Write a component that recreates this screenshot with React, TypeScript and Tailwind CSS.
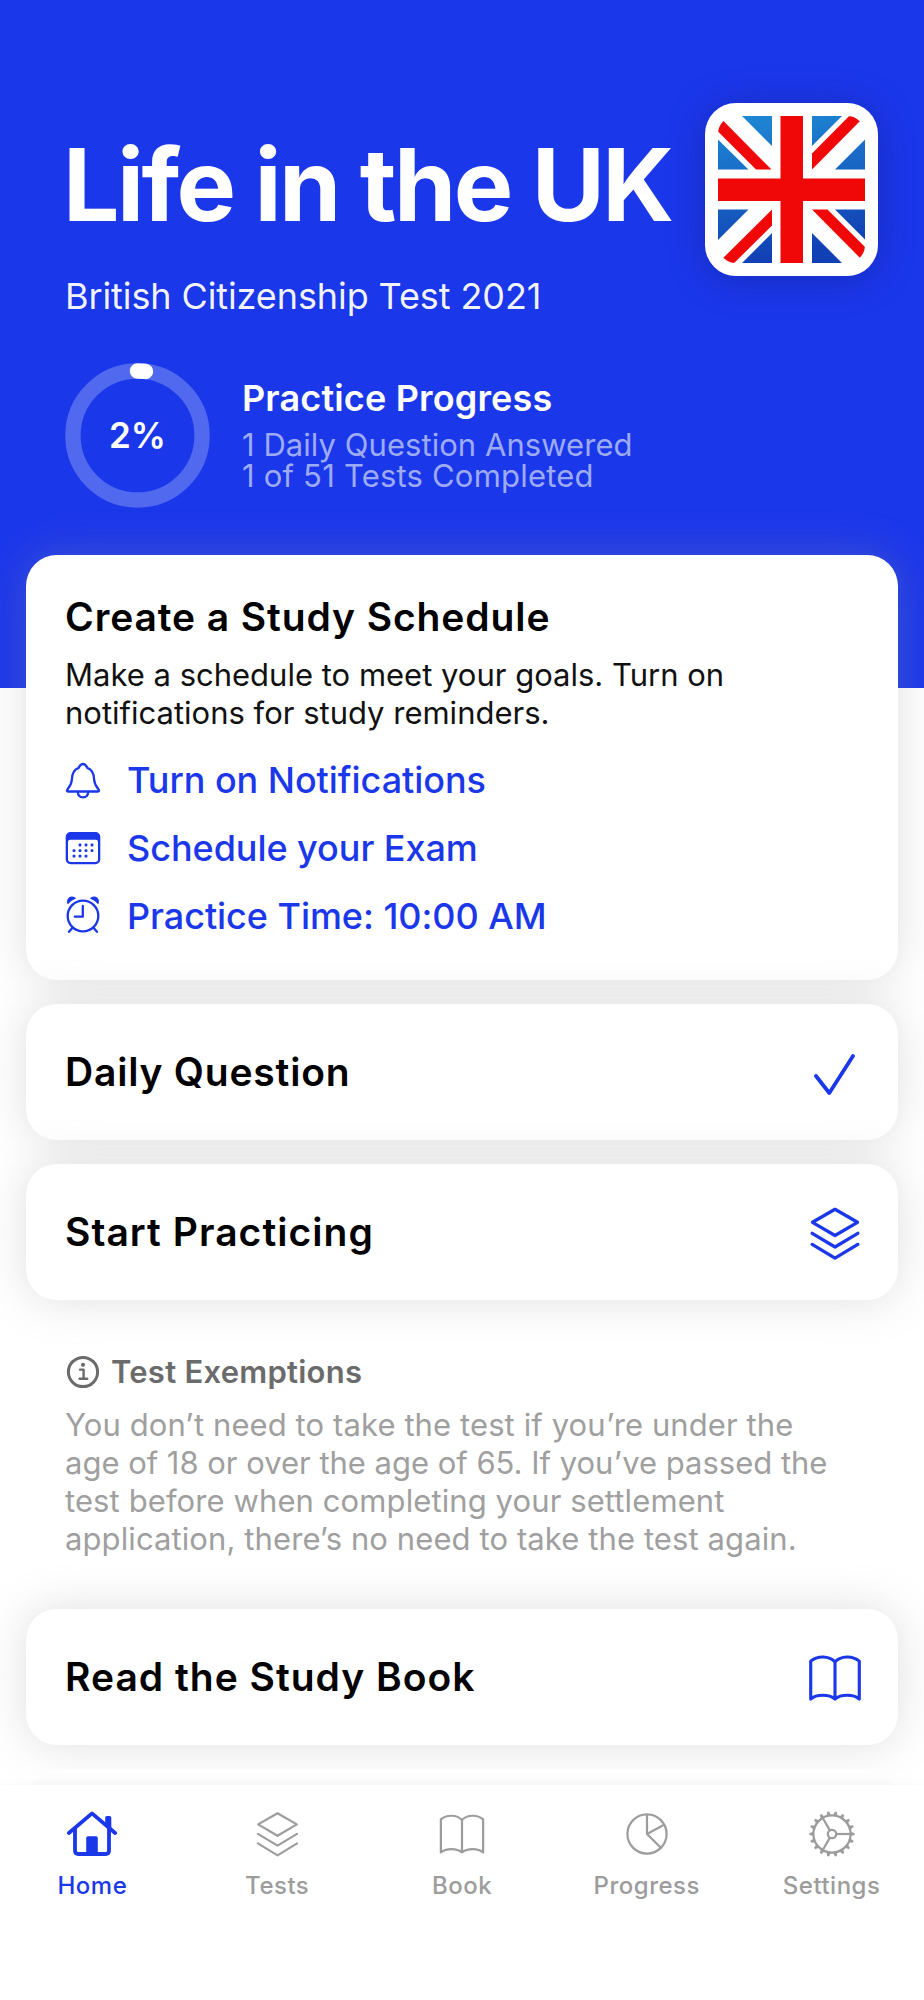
import React from 'react';

interface IconProps {
  className?: string;
  strokeWidth?: number;
}

const BellIcon = () => (
  <svg viewBox="0 0 36 37" className="w-9 h-[37px]" fill="none" stroke="currentColor" strokeWidth="2.3" strokeLinejoin="round" strokeLinecap="round">
    <path d="M3.2 29.5 C1.8 29.5 1.6 28.4 2.4 27.5 C4.5 25 6.6 22.5 6.9 17.5 C7.1 12 8.6 7.9 13.2 6.2 C14.3 5.7 14.6 2 18 2 C21.4 2 21.7 5.7 22.8 6.2 C27.4 7.9 28.9 12 29.1 17.5 C29.4 22.5 31.5 25 33.6 27.5 C34.4 28.4 34.2 29.5 32.8 29.5 Z" />
    <path d="M12.8 30 C13 33.4 15.2 35.3 18 35.3 C20.8 35.3 23 33.4 23.2 30" />
  </svg>
);

const calendarDots = [
  [15, 14], [21, 14], [27, 14],
  [9, 19.6], [15, 19.6], [21, 19.6], [27, 19.6],
  [9, 25.2], [15, 25.2], [21, 25.2],
];

const CalendarIcon = () => (
  <svg viewBox="0 0 36 34" className="w-9 h-[34px]" fill="currentColor">
    <path fillRule="evenodd" d="M5.5 1 H30.5 A4.8 4.8 0 0 1 35.3 5.8 V28.4 A4.8 4.8 0 0 1 30.5 33.2 H5.5 A4.8 4.8 0 0 1 .7 28.4 V5.8 A4.8 4.8 0 0 1 5.5 1 Z M5.3 8.7 Q3 8.7 3 11 V28.2 Q3 30.9 5.7 30.9 H30.3 Q33 30.9 33 28.2 V11 Q33 8.7 30.7 8.7 Z" />
    {calendarDots.map(([x, y]) => (
      <rect key={`${x}-${y}`} x={x - 1.4} y={y - 1.4} width="2.8" height="2.8" rx=".8" />
    ))}
  </svg>
);

const AlarmIcon = () => (
  <svg viewBox="0 0 36 38" className="w-9 h-[38px] overflow-visible" fill="none" stroke="currentColor" strokeWidth="2.3" strokeLinecap="round" strokeLinejoin="round">
    <circle cx="18" cy="19" r="15.3" />
    <path d="M17.8 9 V19.7 H9.8" />
    <path d="M7.3 31 L4 34.8 M28.7 31 L32 34.8" />
    <path d="M3 6.4 C1.6 1.6 5.6 -1.6 10.2 1.3 C7.2 2.5 4.9 4.1 3 6.4 Z M33 6.4 C34.4 1.6 30.4 -1.6 25.8 1.3 C28.8 2.5 31.1 4.1 33 6.4 Z" fill="currentColor" strokeWidth="1.2" />
  </svg>
);

const CheckIcon = () => (
  <svg viewBox="0 0 42 44" className="w-[42px] h-11 mr-[7px] mt-0.5" fill="none" stroke="currentColor" strokeWidth="3.8" strokeLinecap="round" strokeLinejoin="round">
    <path d="M3 25 L16.3 42 L40 5" />
  </svg>
);

const LayersIcon: React.FC<IconProps> = ({ className, strokeWidth = 3.3 }) => (
  <svg viewBox="0 0 50 54" className={className} fill="none" stroke="currentColor" strokeWidth={strokeWidth} strokeLinecap="round" strokeLinejoin="round">
    <path d="M25 2.3 L47.5 15.3 L25 28.5 L2.5 15.3 Z" />
    <path d="M2.2 26.3 L25 40 L47.8 26.3" />
    <path d="M2.2 37.4 L25 51.2 L47.8 37.4" />
  </svg>
);

const BookIcon: React.FC<IconProps> = ({ className, strokeWidth = 3.2 }) => (
  <svg viewBox="0 0 54 48" className={className} fill="none" stroke="currentColor" strokeWidth={strokeWidth} strokeLinecap="round" strokeLinejoin="round">
    <path d="M27 7 C21 .6 9 .3 2.2 6.3 V45 C8 39.8 21 39.8 27 45 C33 39.8 46 39.8 51.8 45 V6.3 C45 .3 33 .6 27 7 Z M27 7 V45" />
  </svg>
);

const InfoIcon = () => (
  <svg viewBox="0 0 34 34" className="w-[34px] h-[34px] ml-px" fill="none" stroke="currentColor" strokeWidth="3" strokeLinecap="round" strokeLinejoin="round">
    <circle cx="17" cy="17" r="14.6" />
    <path d="M14 14.6 H17.6 V23.6 M13.6 23.8 H21.2" strokeWidth="2.4" />
    <circle cx="17" cy="9.8" r="2.1" fill="currentColor" stroke="none" />
  </svg>
);

const HomeIcon = () => (
  <svg viewBox="0 0 52 46" className="w-[52px] h-[46px]" fill="none" stroke="currentColor" strokeWidth="3.8" strokeLinecap="round" strokeLinejoin="round">
    <path d="M2.9 22 L26 2.4 L49.1 22" />
    <path d="M9 18 V39.5 Q9 43 12.5 43 H39.5 Q43 43 43 39.5 V18" />
    <path d="M20.2 43 V27 Q20.2 25.2 22 25.2 H30 Q31.8 25.2 31.8 27 V43 Z" fill="currentColor" stroke="none" />
    <path d="M39.2 14 V6.8 Q39.2 5 41 5 H43.6 Q45.3 5 45.3 6.8 V19 Z" fill="currentColor" stroke="none" />
  </svg>
);

const ProgressIcon = () => (
  <svg viewBox="0 0 44 44" className="w-11 h-11" fill="none" stroke="currentColor" strokeWidth="2.2" strokeLinejoin="round">
    <circle cx="22" cy="22" r="19.6" />
    <path d="M22 2.4 V22 L38.6 13 M22 22 L35.6 35.5" />
  </svg>
);

const teeth = Array.from({ length: 18 }, (_, i) => i * 20);

const SettingsIcon = () => (
  <svg viewBox="0 0 46 46" className="w-[46px] h-[46px]" fill="none" stroke="currentColor" strokeWidth="2.2">
    <circle cx="23" cy="23" r="18.6" />
    <circle cx="23" cy="23" r="4.2" />
    {[0, 120, 240].map((a) => (
      <path key={a} d="M27.2 23 H41.5" transform={`rotate(${a} 23 23)`} />
    ))}
    {teeth.map((a) => (
      <path key={a} d="M41 20.7 L45.6 22 V24 L41 25.3 Z" fill="currentColor" stroke="none" transform={`rotate(${a} 23 23)`} />
    ))}
  </svg>
);

const FlagLogo = () => (
  <div className="w-[173px] h-[173px] shrink-0 rounded-[31px] bg-white p-[13px] shadow-[0_3px_36px_rgba(20,30,120,0.4)]">
    <svg viewBox="0 0 147 147" className="w-[147px] h-[147px]">
      <defs>
        <linearGradient id="field" x1="0" y1="0" x2="30" y2="147" gradientUnits="userSpaceOnUse">
          <stop offset="0" stopColor="#1f8bd4" />
          <stop offset="1" stopColor="#1140b4" />
        </linearGradient>
        <clipPath id="frame">
          <rect width="147" height="147" rx="18" />
        </clipPath>
      </defs>
      <path
        fill="url(#field)"
        d="M24 0 H54 V30 Z M94 0 H124 L94 30 Z M0 23.5 L30.5 53.5 H0 Z M147 23.5 V53.5 H117 Z M0 93.5 H30.5 L0 124 Z M117 93.5 H147 V123.5 Z M54 117 V147 H24 Z M94 117 L124 147 H94 Z"
      />
      <g fill="#f00808">
        <path d="M62.5 0 H85 V62.5 H147 V85 H85 V147 H62.5 V85 H0 V62.5 H62.5 Z" />
        <g clipPath="url(#frame)">
          <path d="M-9 -9 L7 6.5 L53.5 53.5 H38 L-9 6.5 Z" />
          <path d="M147 -16 L94 37.5 V53.5 L156 -9 Z" />
          <path d="M54 93.5 V109.5 L0 163 L-9 156 Z" />
          <path d="M94 93.5 H109.5 L160 144 V160 Z" />
        </g>
      </g>
    </svg>
  </div>
);

const ProgressRing: React.FC<{ percent: number }> = ({ percent }) => {
  const circumference = 2 * Math.PI * 65;
  return (
    <div className="grid place-items-center w-[145px] h-[145px] shrink-0">
      <svg viewBox="0 0 146 146" className="col-start-1 row-start-1 w-[145px] h-[145px] -rotate-90" fill="none" strokeWidth="15.5">
        <circle cx="73" cy="73" r="65" stroke="#5069ee" />
        <circle
          cx="73"
          cy="73"
          r="65"
          stroke="#fff"
          strokeLinecap="round"
          strokeDasharray={`${(circumference * percent) / 100} ${circumference}`}
        />
      </svg>
      <span className="col-start-1 row-start-1 pb-0.5 text-[35px] leading-10 font-semibold">{percent}%</span>
    </div>
  );
};

const cardClass = 'mx-[26px] rounded-[31px] bg-white shadow-[0_0_44px_rgba(150,150,150,0.3)]';

interface ActionCardProps {
  title: string;
  titleClass: string;
  icon: React.ReactNode;
  className: string;
}

const ActionCard: React.FC<ActionCardProps> = ({ title, titleClass, icon, className }) => (
  <div className={`${cardClass} ${className} h-[136px] flex items-center justify-between pl-[39px] pr-[36px] shrink-0`}>
    <h2 className={`text-[39px] leading-10 font-semibold text-black ${titleClass}`}>{title}</h2>
    <div className="text-[#1b37ea]">{icon}</div>
  </div>
);

const scheduleItems = [
  { label: 'Turn on Notifications', icon: <BellIcon /> },
  { label: 'Schedule your Exam', icon: <CalendarIcon /> },
  { label: 'Practice Time: 10:00 AM', icon: <AlarmIcon /> },
];

const tabs = [
  { label: 'Home', icon: <HomeIcon />, active: true },
  { label: 'Tests', icon: <LayersIcon className="w-[43px] h-[47px]" strokeWidth={2.5} /> },
  { label: 'Book', icon: <BookIcon className="w-[46px] h-[41px] mt-px" strokeWidth={2.6} /> },
  { label: 'Progress', icon: <ProgressIcon /> },
  { label: 'Settings', icon: <SettingsIcon /> },
];

const App: React.FC = () => {
  return (
    <div className="w-[924px] h-[2000px] overflow-hidden bg-white flex flex-col font-['Inter',sans-serif]">
      <div className="h-[1785px] shrink-0 overflow-hidden flex flex-col">
        <header className="h-[688px] shrink-0 bg-[#1b37ea] text-white pt-[103px] pl-[65px] pr-[46px]">
          <div className="flex justify-between items-start h-[213px]">
            <div className="pt-8 whitespace-nowrap">
              <h1 className="-ml-0.5 text-[100px] leading-[100px] font-bold tracking-[-2.6px]">Life in the UK</h1>
              <p className="mt-[41px] text-[36px] leading-10 text-white/95 tracking-[-0.1px]">British Citizenship Test 2021</p>
            </div>
            <FlagLogo />
          </div>
          <div className="mt-[47px] flex items-start gap-8">
            <ProgressRing percent={2} />
            <div className="pt-[15px] whitespace-nowrap">
              <h2 className="text-[36px] leading-10 font-semibold tracking-[0.15px]">Practice Progress</h2>
              <p className="mt-[11px] text-[31px] leading-[31px] tracking-[0.05px] text-[#9dabf6]">1 Daily Question Answered</p>
              <p className="text-[31px] leading-[31px] tracking-[0.2px] text-[#9dabf6]">1 of 51 Tests Completed</p>
            </div>
          </div>
        </header>

        <main className="relative -mt-[133px] flex flex-col">
          <section className={`${cardClass} h-[425px] shrink-0 pt-[42px] px-[39px] whitespace-nowrap`}>
            <h2 className="text-[39px] leading-10 font-semibold text-black tracking-[0.9px]">Create a Study Schedule</h2>
            <p className="mt-[19px] text-[31px] leading-[38px] text-[#111]">
              Make a schedule to meet your goals. Turn on
              <br />
              notifications for study reminders.
            </p>
            <ul className="mt-3.5 text-[#1b37ea]">
              {scheduleItems.map((item) => (
                <li key={item.label} className="h-[68px] flex items-center gap-[26px]">
                  {item.icon}
                  <span className="pb-px text-[36px] leading-10 font-medium tracking-[-0.05px]">{item.label}</span>
                </li>
              ))}
            </ul>
          </section>

          <ActionCard title="Daily Question" titleClass="tracking-[0.8px]" icon={<CheckIcon />} className="mt-6" />
          <ActionCard
            title="Start Practicing"
            titleClass="tracking-[1.05px]"
            icon={<LayersIcon className="w-[50px] h-[54px] mr-[2px] mt-[3px]" />}
            className="mt-6"
          />

          <section className="mt-[52px] pl-[65px] whitespace-nowrap">
            <h3 className="flex items-center gap-[11px] text-[31px] leading-10 font-semibold text-[#6b6b6b] tracking-[0.25px]">
              <InfoIcon />
              Test Exemptions
            </h3>
            <p className="mt-3.5 text-[31px] leading-[38px] text-[#9f9f9f] tracking-[0.1px]">
              You don’t need to take the test if you’re under the
              <br />
              <span className="tracking-[-0.02px]">age of 18 or over the age of 65. If you’ve passed the</span>
              <br />
              test before when completing your settlement
              <br />
              application, there’s no need to take the test again.
            </p>
          </section>

          <ActionCard
            title="Read the Study Book"
            titleClass="tracking-[1px]"
            icon={<BookIcon className="w-[54px] h-[47px] mt-[3px]" />}
            className="mt-[51px]"
          />
          <div className="mx-[26px] mt-6 h-[136px] shrink-0 rounded-[31px] bg-linear-to-b from-[#fefefe] to-[#fbfbfb] to-[16px]" />
        </main>
      </div>

      <nav className="relative flex-1 bg-white grid grid-cols-5 pt-[25px] content-start shadow-[0_0_10px_rgba(0,0,0,0.04)]">
        {tabs.map((tab) => (
          <div key={tab.label} className={`flex flex-col items-center ${tab.active ? 'text-[#1b37ea]' : 'text-[#9c9c9c]'}`}>
            <div className="h-12 flex items-center">{tab.icon}</div>
            <span className="mt-[13px] text-[24px] leading-[30px] font-medium tracking-[0.5px]">{tab.label}</span>
          </div>
        ))}
      </nav>
    </div>
  );
};

export default App;
